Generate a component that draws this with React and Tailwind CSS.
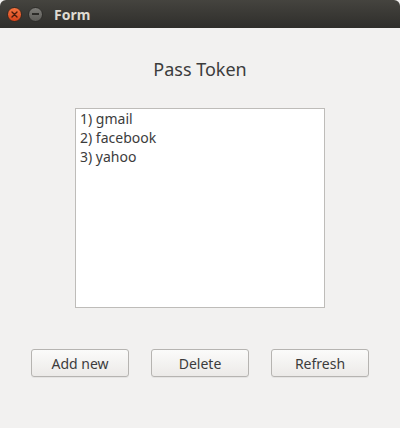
import { useState } from 'react';

const tokens = ['gmail', 'facebook', 'yahoo'];

const WinButton = ({ children }) => (
  <button className="w-[98px] h-[28px] rounded-[3px] border border-[#b6b4b1] bg-gradient-to-b from-[#fbfbfa] to-[#eceae8] text-[14px] text-[#3c3c3c] shadow-[0_1px_0_rgba(0,0,0,0.05)]">
    {children}
  </button>
);

const App = () => {
  const [items] = useState(tokens);

  return (
    <div
      className="w-[400px] h-[428px] flex flex-col bg-[#f2f1f0] overflow-hidden"
      style={{ fontFamily: '"Noto Sans", "Open Sans", sans-serif' }}
    >
      {/* title bar */}
      <div className="h-[28px] shrink-0 flex items-center gap-[6px] pl-[7px] rounded-t-[6px] bg-gradient-to-b from-[#45443f] to-[#2f2e2b]">
        <div className="w-[15px] h-[15px] rounded-full bg-gradient-to-b from-[#f4733f] to-[#d8431a] border border-[#3a2a20] flex items-center justify-center">
          <svg width="7" height="7" viewBox="0 0 7 7">
            <path d="M1 1L6 6M6 1L1 6" stroke="#4a1c0c" strokeWidth="1.4" strokeLinecap="round" />
          </svg>
        </div>
        <div className="w-[15px] h-[15px] rounded-full bg-gradient-to-b from-[#7d7c78] to-[#5c5b57] border border-[#2e2d2a] flex items-center justify-center">
          <div className="w-[7px] h-[1.5px] bg-[#2c2b28]" />
        </div>
        <span className="ml-[5px] text-[14px] font-bold text-[#dfdbd2]">Form</span>
      </div>

      {/* body */}
      <div className="flex-1 flex flex-col items-center">
        <h1 className="mt-[28px] text-[18px] leading-[26px] text-[#3c3c3c]">Pass Token</h1>

        <div className="mt-[26px] w-[250px] h-[200px] bg-white border border-[#bebcb9] px-[4px]">
          {items.map((t, i) => (
            <div key={t} className="text-[14px] leading-[19px] text-[#3c3c3c]">
              {i + 1}) {t}
            </div>
          ))}
        </div>

        <div className="mt-[41px] w-full flex justify-between px-[31px]">
          <WinButton>Add new</WinButton>
          <WinButton>Delete</WinButton>
          <WinButton>Refresh</WinButton>
        </div>
      </div>
    </div>
  );
};

export default App;
